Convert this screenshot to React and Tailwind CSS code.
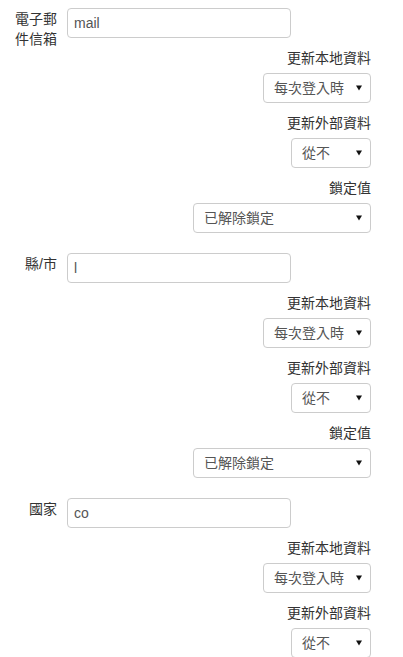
import React from "react";

const FONT = { fontFamily: '"Liberation Sans", "Noto Sans CJK TC", sans-serif' };

function Arrow() {
  return (
    <svg width="6" height="6" viewBox="0 0 6 6" className="shrink-0">
      <path d="M0 0.5 L6 0.5 L3 5.5 Z" fill="#111" />
    </svg>
  );
}

function SelectBox({ value, width }) {
  return (
    <div
      className={`mt-[5px] flex h-[30px] items-center justify-between rounded-[4px] border border-[#cccccc] bg-white pl-[10px] pr-[8px] text-[14px] text-[#555555] ${width}`}
    >
      <span className="leading-[20px]">{value}</span>
      <Arrow />
    </div>
  );
}

function SubField({ label, value, width }) {
  return (
    <div className="flex flex-col items-end">
      <div className="mt-[10px] text-right text-[14px] leading-[20px] text-[#333333]">{label}</div>
      <SelectBox value={value} width={width} />
    </div>
  );
}

function Group({ label, inputValue, lock = true }) {
  return (
    <div className="mb-[20px] flex">
      <div className="w-[57px] shrink-0 pl-[15px] pt-[1px] text-right text-[14px] leading-[20px] text-[#333333]">
        {label}
      </div>
      <div className="ml-[10px] flex w-[304px] flex-col items-end">
        <div className="flex h-[30px] w-[224px] items-center self-start rounded-[4px] border border-[#cccccc] bg-white px-[6px] text-[14px] text-[#555555]">
          <span className="leading-[20px]">{inputValue}</span>
        </div>
        <SubField label="更新本地資料" value="每次登入時" width="w-[108px]" />
        <SubField label="更新外部資料" value="從不" width="w-[80px]" />
        {lock && <SubField label="鎖定值" value="已解除鎖定" width="w-[178px]" />}
      </div>
    </div>
  );
}

export default function App() {
  return (
    <div className="min-h-screen bg-white pt-[8px]" style={FONT}>
      <Group label="電子郵件信箱" inputValue="mail" />
      <Group label="縣/市" inputValue="l" />
      <Group label="國家" inputValue="co" />
    </div>
  );
}
